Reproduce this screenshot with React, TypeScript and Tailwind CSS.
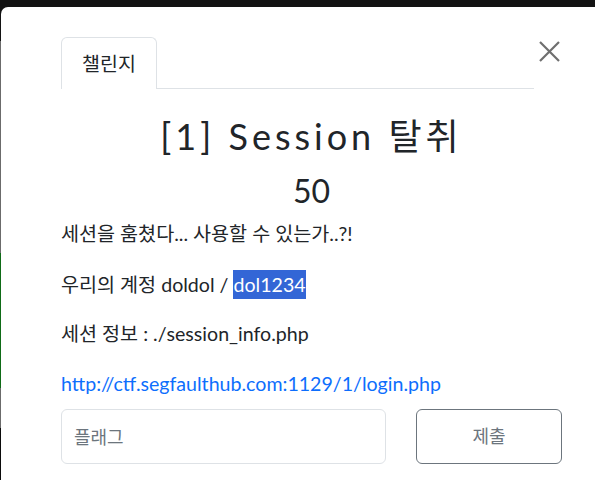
import React from 'react';

const font = "font-['Lato','Noto_Sans_CJK_KR',sans-serif]";

const CloseIcon = () => (
  <svg width="21" height="21" viewBox="0 0 21 21" className="block">
    <path d="M1 1 L20 20 M20 1 L1 20" stroke="#6f6f6f" strokeWidth="2.2" fill="none" />
  </svg>
);

const App: React.FC = () => {
  return (
    <div className={`w-[595px] h-[480px] overflow-hidden bg-[#131313] flex flex-col ${font}`}>
      {/* top strip */}
      <div className="h-[7px] shrink-0" />
      <div className="flex flex-1 min-h-0">
        {/* background page peeking through at left edge */}
        <div className="w-px shrink-0 flex flex-col -mt-[7px]">
          <div className="h-[41px] bg-[#131313]" />
          <div className="h-[212px] bg-[#6b6b6b]" />
          <div className="h-[135px] bg-[#0f6b17]" />
          <div className="h-[40px] bg-[#6b6b6b]" />
          <div className="flex-1 bg-[#0b0b0b]" />
        </div>

        {/* modal */}
        <div className="flex-1 bg-white rounded-tl-[7px] pl-[60px] pt-[30px]">
          <div className="w-[501px] flex flex-col">
            {/* header with tab + close */}
            <div className="flex items-start h-[52px]">
              <div className="w-[96px] h-[52px] border border-b-0 border-[#dee2e6] rounded-t-[6px] flex items-center justify-center text-[19.5px] text-[#212529]">
                챌린지
              </div>
              <div className="w-[377px] h-[52px] border-b border-[#dee2e6]" />
              <div className="pl-[5px] pt-[4px]">
                <CloseIcon />
              </div>
            </div>

            <h3 className="mt-[22px] h-[50px] leading-[50px] text-center text-[36px] tracking-[4px] text-[#212529]">
              [1] Session 탈취
            </h3>
            <h4 className="mt-[10px] h-[40px] leading-[40px] text-center text-[32px] text-[#212529]">
              50
            </h4>

            <div className="mt-[8px] text-[19.6px] text-[#212529]">
              <p className="h-[30px] leading-[30px] mb-[21px]">세션을 훔쳤다... 사용할 수 있는가..?!</p>
              <p className="h-[30px] leading-[30px] mb-[19px]">
                우리의 계정 doldol /{' '}
                <span className="bg-[#3366d6] text-white py-[3px]">dol1234</span>
              </p>
              <p className="h-[30px] leading-[30px] mb-[20px]">세션 정보 : ./session_info.php</p>
              <p className="h-[30px] leading-[30px]">
                <a className="text-[#0d6efd]" href="#">
                  http://ctf.segfaulthub.com:1129/1/login.php
                </a>
              </p>
            </div>

            <div className="mt-[10px] flex items-center justify-between">
              <input
                className="w-[325px] h-[55px] border border-[#dee2e6] rounded-[6px] px-[12px] text-[18px] placeholder:text-[#6c757d] outline-none"
                placeholder="플래그"
              />
              <button className="w-[146px] h-[55px] border border-[#6c757d] rounded-[6px] text-[18px] text-[#6c757d] bg-white">
                제출
              </button>
            </div>
          </div>
        </div>
      </div>
    </div>
  );
};

export default App;
